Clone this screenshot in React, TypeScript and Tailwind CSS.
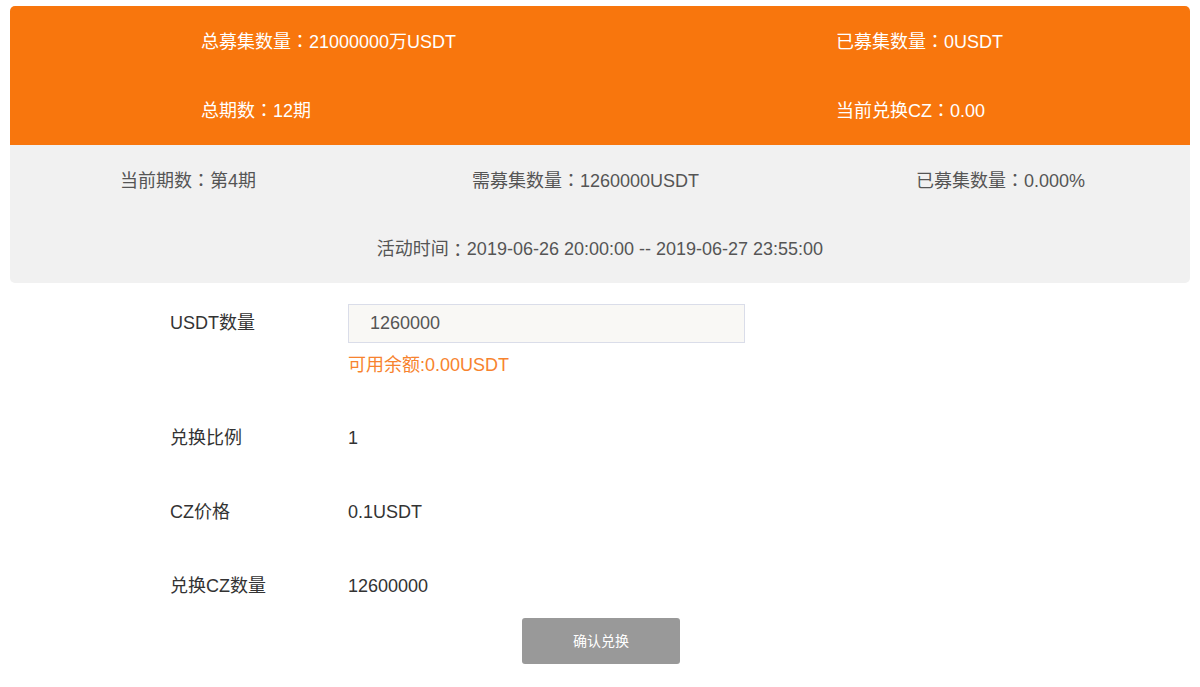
const font = { fontFamily: '"Liberation Sans", "Noto Sans CJK SC", sans-serif' };

// full-width colon centred in its cell, as in the reference
function Colon() {
  return <span style={{ fontFamily: '"Noto Sans CJK TC", sans-serif' }}>：</span>;
}

function FormRow({ label, value }: { label: string; value: string }) {
  return (
    <div className="flex h-[40px] items-center text-[18px] text-[#333]">
      <div className="w-[178px]">{label}</div>
      <div>{value}</div>
    </div>
  );
}

export default function App() {
  return (
    <div className="w-[1200px] h-[687px] bg-white overflow-hidden" style={font}>
      <div className="mx-[10px] mt-[6px] rounded-[5px] overflow-hidden">
        <div className="bg-[#f8760d] text-white text-[18px]">
          <div className="grid grid-cols-2 h-[70px] items-center">
            <div className="pl-[191px]">总募集数量<Colon />21000000万USDT</div>
            <div className="pl-[236px]">已募集数量<Colon />0USDT</div>
          </div>
          <div className="grid grid-cols-2 h-[69px] items-center">
            <div className="pl-[191px]">总期数<Colon />12期</div>
            <div className="pl-[236px]">当前兑换CZ<Colon />0.00</div>
          </div>
        </div>
        <div className="bg-[#f1f1f1] text-[#555] text-[18px]">
          <div className="grid grid-cols-[462px_444px_1fr] h-[70px] items-center">
            <div className="pl-[110px]">当前期数<Colon />第4期</div>
            <div>需募集数量<Colon />1260000USDT</div>
            <div>已募集数量<Colon />0.000%</div>
          </div>
          <div className="h-[68px] flex items-center justify-center">
            活动时间<Colon />2019-06-26 20:00:00 -- 2019-06-27 23:55:00
          </div>
        </div>
      </div>

      <div className="pl-[170px] mt-[21px]">
        <div className="flex items-start text-[18px] text-[#333]">
          <div className="w-[178px] h-[39px] leading-[39px]">USDT数量</div>
          <div className="flex flex-col">
            <input
              readOnly
              value="1260000"
              className="w-[397px] h-[39px] border border-[#dadde9] bg-[#f9f8f5] pl-[21px] text-[18px] text-[#555] outline-none"
              style={font}
            />
            <div className="mt-[10px] leading-[24px] text-[#f7832e]">可用余额:0.00USDT</div>
          </div>
        </div>
        <div className="mt-[41px] flex flex-col gap-[34px]">
          <FormRow label="兑换比例" value="1" />
          <FormRow label="CZ价格" value="0.1USDT" />
          <FormRow label="兑换CZ数量" value="12600000" />
        </div>
      </div>

      <div className="flex justify-center mt-[12px]">
        <button className="ml-[2px] w-[158px] h-[46px] rounded-[3px] bg-[#999999] text-white text-[14px]">
          确认兑换
        </button>
      </div>
    </div>
  );
}
